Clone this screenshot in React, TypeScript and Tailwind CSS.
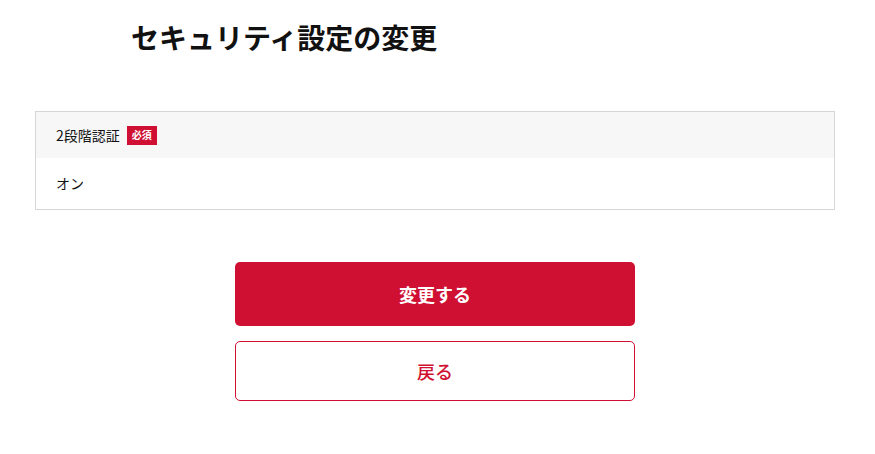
export default function App() {
  return (
    <div className="w-[875px] h-[454px] bg-white" style={{ fontFamily: '"Noto Sans CJK JP", "Noto Sans", sans-serif' }}>
      <div className="ml-[35px] w-[800px] pt-[17px]">
        <h1 className="pl-[96px] text-[28px] font-bold leading-[40px] text-[#111111]">セキュリティ設定の変更</h1>
        <div className="mt-[54px] border border-[#d6d6d6]">
          <div className="flex h-[46px] items-center gap-[7px] bg-[#f7f7f7] px-[20px]">
            <span className="text-[14px] text-[#111111]">2段階認証</span>
            <span className="flex h-[19px] w-[30px] items-center justify-center bg-[#cf1032] text-[10px] font-bold leading-none text-white">必須</span>
          </div>
          <div className="flex h-[51px] items-center px-[20px] text-[14px] text-[#111111]">オン</div>
        </div>
        <div className="mt-[52px] flex flex-col items-center gap-[15px]">
          <button className="flex h-[64px] w-[400px] items-center justify-center rounded-[5px] bg-[#cf1032] text-[18px] font-bold text-white">変更する</button>
          <button className="flex h-[60px] w-[400px] items-center justify-center rounded-[5px] border border-[#cf1032] bg-white text-[18px] font-medium text-[#cf1032]">戻る</button>
        </div>
      </div>
    </div>
  );
}
